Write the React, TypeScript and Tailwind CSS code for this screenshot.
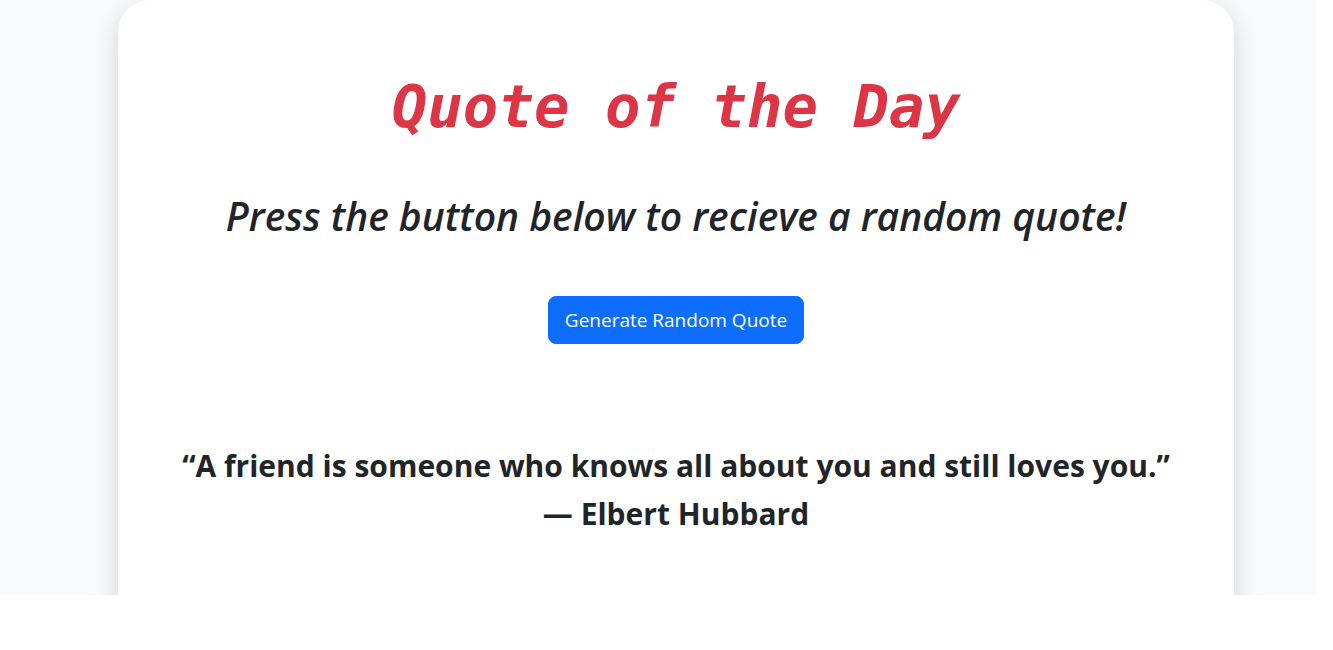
export default function App() {
  const sans = "font-['Open_Sans','Noto_Sans',sans-serif]";

  return (
    <div className="w-[1316px] h-[595px] bg-[#f8f9fa] overflow-hidden">
      {/* Card */}
      <div
        className={`ml-[118px] w-[1116px] h-[640px] bg-white rounded-[32px] shadow-[0_0.5rem_1.5rem_rgba(0,0,0,0.15)] text-center text-[#212529] ${sans}`}
      >
        <div className="pt-[72px]">
          <h1 className="font-['DejaVu_Sans_Mono',monospace] italic font-bold text-[#dc3545] text-[59px] leading-[1.2]">
            Quote of the Day
          </h1>
        </div>

        <h2 className="mt-[50px] text-[39px] italic font-semibold leading-[1.2]">
          Press the button below to recieve a random quote!
        </h2>

        <div className="mt-[56px]">
          <button className="px-4 py-[9px] text-[19px] leading-[28px] rounded-lg bg-[#0d6efd] text-white border border-[#0d6efd]">
            Generate Random Quote
          </button>
        </div>

        {/* Quote */}
        <div className="mt-[98px] font-bold text-[30px] leading-[48px]">
          <p>“A friend is someone who knows all about you and still loves you.”</p>
          <p>— Elbert Hubbard</p>
        </div>
      </div>
    </div>
  );
}
